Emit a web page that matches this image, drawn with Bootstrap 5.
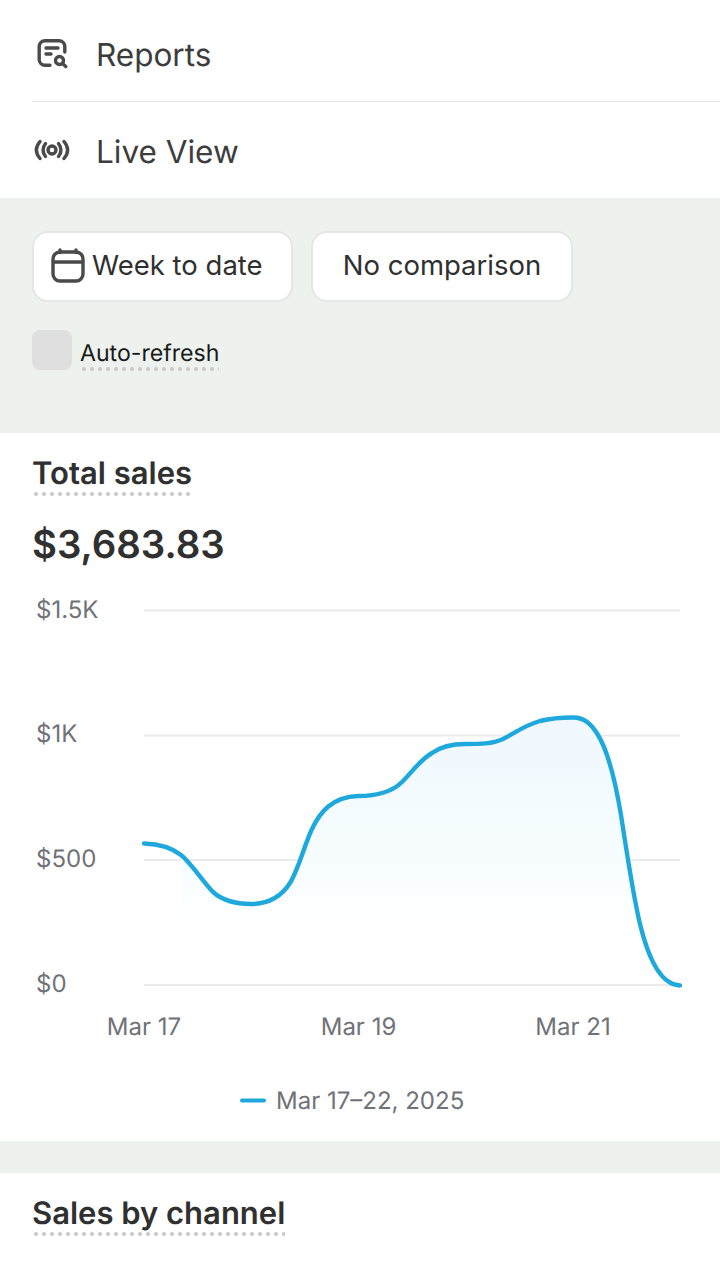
<!DOCTYPE html>
<html lang="en">
<head>
  <meta charset="UTF-8" />
  <title>Analytics</title>
  <meta name="viewport" content="width=device-width, initial-scale=1" />
  <link href="https://cdn.jsdelivr.net/npm/bootstrap@5.3.0/dist/css/bootstrap.min.css" rel="stylesheet" />
  <style>
    body { font-family: "Inter", "Liberation Sans", sans-serif; color: #303030; background: #fff; width: 720px; height: 1280px; overflow: hidden; text-rendering: geometricPrecision; }
    .menu-list { padding-left: 32px; }
    .menu-row { height: 101px; padding-top: 9px; gap: 24px; font-size: 31.5px; color: #3d3d3d; }
    .menu-row + .menu-row { border-top: 1px solid #e3e3e3; height: 97px; padding-top: 4px; }
    .menu-row svg { width: 40px; height: 40px; flex: none; margin-top: -4px; }
    .filter-band { background: #eef2ef; height: 235px; padding: 33px 32px 0; }
    .filter-row { gap: 18px; }
    .filter-btn { height: 71px; background: #fff; border: 2px solid #e6e6e6; border-radius: 16px; font-size: 27.5px; color: #303030; padding: 0 0 2px; }
    .btn-range { width: 261px; gap: 7px; padding-left: 17px; }
    .btn-compare { width: 262px; }
    .refresh-row { margin-top: 28px; gap: 8px; }
    .refresh-box { width: 40px; height: 40px; background: #dfdfdf; border-radius: 8px; }
    .refresh-label { font-size: 23.1px; line-height: 28px; color: #1a1a1a; margin-top: 9px; }
    .dotted { background-image: radial-gradient(circle, #cccccc 2px, transparent 2.2px); background-size: 8px 4px; background-repeat: repeat-x; background-position: left bottom; padding-bottom: 4px; display: inline-block; }
    .metric-card { height: 708px; padding: 23px 0 0; }
    .metric-title { font-size: 31px; font-weight: 600; line-height: 36px; color: #303030; margin-left: 32px; }
    .metric-value { font-size: 38.4px; font-weight: 600; line-height: 48px; margin: 25px 0 0 32px; color: #303030; }
    .chart-svg { display: block; width: 720px; height: 560px; margin-top: 16px; }
    .chart-svg text { font-family: "Inter", "Liberation Sans", sans-serif; font-size: 24px; fill: #707278; }
    .gap-band { background: #eef2ef; height: 32px; }
    .channel-card { padding: 23px 0 0; }
  </style>
</head>
<body>
  <div class="menu-list">
    <div class="menu-row d-flex align-items-center">
      <svg viewBox="0 0 40 40" fill="none" stroke="#4a4a4a" stroke-width="3.4" stroke-linecap="round">
        <path d="M18 32.300H13a5.800 5.800 0 0 1-5.800-5.800V13.500a5.800 5.800 0 0 1 5.800-5.800h14a5.800 5.800 0 0 1 5.800 5.800V19" />
        <path d="M14 15h12M14 21h5" />
        <circle cx="27.500" cy="27.500" r="4" />
        <path d="M31 31 33.800 33.600" />
      </svg>
      <span>Reports</span>
    </div>
    <div class="menu-row d-flex align-items-center">
      <svg viewBox="0 0 40 40" fill="none" stroke="#4a4a4a" stroke-width="3.400" stroke-linecap="round">
        <circle cx="20" cy="20" r="4" />
        <path d="M13.500 13.500c-3 4-3 9 0 13M26.500 13.500c3 4 3 9 0 13" />
        <path d="M8 11.500c-4.700 5.500-4.700 11.500 0 17M32 11.500c4.700 5.500 4.700 11.500 0 17" />
      </svg>
      <span>Live View</span>
    </div>
  </div>

  <div class="filter-band">
    <div class="d-flex filter-row">
      <button type="button" class="btn filter-btn btn-range d-flex align-items-center">
        <svg width="34" height="36" viewBox="0 0 34 36" fill="none" stroke="#4a4a4a" stroke-width="3.400" stroke-linecap="round">
          <rect x="2" y="4" width="30" height="29" rx="7" />
          <path d="M2.500 14h29M9 2v2.500M25 2v2.500" />
        </svg>
        <span>Week to date</span>
      </button>
      <button type="button" class="btn filter-btn btn-compare">No comparison</button>
    </div>
    <div class="refresh-row d-flex">
      <div class="refresh-box"></div>
      <div><span class="refresh-label dotted">Auto-refresh</span></div>
    </div>
  </div>

  <div class="metric-card">
    <div><span class="metric-title dotted">Total sales</span></div>
    <div class="metric-value">$3,683.83</div>
    <svg class="chart-svg" viewBox="0 585 720 560">
      <defs>
        <linearGradient id="areaFade" x1="0" y1="717" x2="0" y2="925" gradientUnits="userSpaceOnUse">
          <stop offset="0" stop-color="#f0f8fe" />
          <stop offset="0.7" stop-color="#f7fdff" />
          <stop offset="1" stop-color="#ffffff" />
        </linearGradient>
      </defs>
      <g stroke="#ebebeb" stroke-width="2">
        <line x1="144" y1="610.500" x2="680" y2="610.500" />
        <line x1="144" y1="735.500" x2="680" y2="735.500" />
        <line x1="144" y1="860" x2="680" y2="860" />
        <line x1="144" y1="985" x2="680" y2="985" />
      </g>
      <path fill="url(#areaFade)" d="M181 925 L181 855 C191 863 201 879 213 892 C222 900 235 904 251 904 C268 904 281 897 290 883 C299 868 304 846 312 829 C320 812 332 797 358 796 C375 796 392 792 402 782 C413 771 420 760 432 753 C442 746 452 744 465 744 C480 744 492 744 503 739 C515 733 523 726 540 721 C552 718 562 717.500 573 717.500 C585 717.500 592 725 598 735 C609 753 616 785 621 815 C628 860 633 895 640 924 Z" />
      <path fill="none" stroke="#1ea8dc" stroke-width="4.400" stroke-linecap="round" d="M144 843.500 C158 844 171 847 181 855 C191 863 201 879 213 892 C222 900 235 904 251 904 C268 904 281 897 290 883 C299 868 304 846 312 829 C320 812 332 797 358 796 C375 796 392 792 402 782 C413 771 420 760 432 753 C442 746 452 744 465 744 C480 744 492 744 503 739 C515 733 523 726 540 721 C552 718 562 717.500 573 717.500 C585 717.500 592 725 598 735 C609 753 616 785 621 815 C628 860 633 895 640 924 C648 957 660 985 680 985.500" />
      <text x="36" y="618">$1.5K</text>
      <text x="36" y="742">$1K</text>
      <text x="36" y="867">$500</text>
      <text x="36" y="992">$0</text>
      <text x="144" y="1035" text-anchor="middle">Mar 17</text>
      <text x="358.500" y="1035" text-anchor="middle">Mar 19</text>
      <text x="573" y="1035" text-anchor="middle">Mar 21</text>
      <line x1="242" y1="1100.500" x2="264" y2="1100.500" stroke="#1ea8dc" stroke-width="4" stroke-linecap="round" />
      <text x="276" y="1109">Mar 17–22, 2025</text>
    </svg>
  </div>

  <div class="gap-band"></div>

  <div class="channel-card">
    <span class="metric-title dotted">Sales by channel</span>
  </div>

  <script src="https://cdn.jsdelivr.net/npm/bootstrap@5.3.0/dist/js/bootstrap.bundle.min.js"></script>
</body>
</html>
